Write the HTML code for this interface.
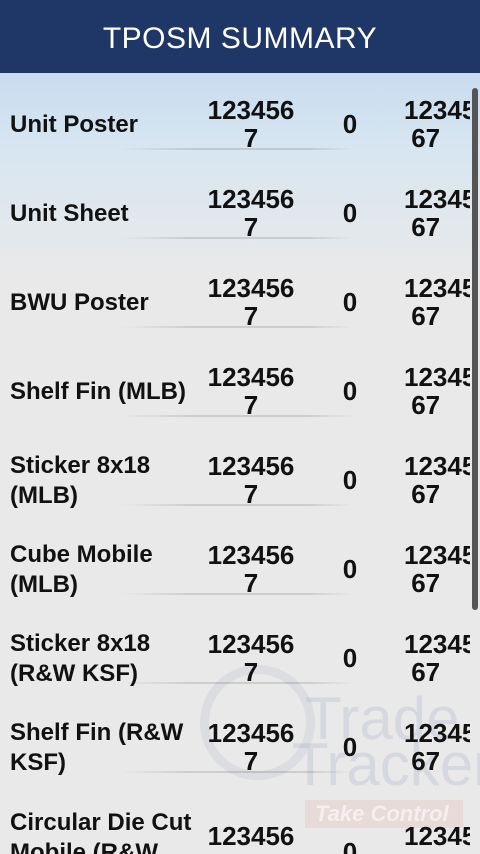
<!DOCTYPE html>
<html><head><style>
*{margin:0;padding:0;box-sizing:border-box}
html,body{width:480px;height:854px;overflow:hidden}
body{background:#e9e9e9;font-family:"Liberation Sans",sans-serif;position:relative}
.hd{position:absolute;left:0;top:0;width:480px;height:73px;background:#1f3766;color:#fff;font-size:30px;text-align:center;line-height:78px;letter-spacing:0.5px}
.bg{position:absolute;left:0;top:73px;width:480px;height:200px;background:linear-gradient(180deg,#c9dcef 0%,#d8e6f1 40%,#e9e9e9 100%)}
.row{position:absolute;left:0;width:480px;height:89px;font-weight:bold;color:#111}
.lab{position:absolute;left:10px;font-size:24px;line-height:30px;white-space:nowrap}
.n{position:absolute;font-size:26px;line-height:28px;text-align:center}
.c2{left:200px;width:102px;top:-14px}
.c3{left:335px;width:30px;top:0}
.c4{left:400px;width:70px;top:-14px;text-align:left;padding-left:4px;overflow:hidden;white-space:nowrap}
.sep{position:absolute;left:120px;width:234px;height:2px;background:linear-gradient(90deg,rgba(0,0,0,0),rgba(0,0,0,0.12) 30%,rgba(0,0,0,0.12) 80%,rgba(0,0,0,0));top:38px}
.sb{position:absolute;left:472px;top:88px;width:6px;height:522px;background:#555;border-radius:3px}
.wm{position:absolute;color:rgba(120,140,170,0.18);font-size:60px;font-weight:normal}
.last{position:absolute;left:0;top:800px;width:480px;height:54px;overflow:hidden}
</style></head><body>
<div class="hd">TPOSM SUMMARY</div>
<div class="bg"></div>
<div class="wm" style="left:305px;top:684px">Trade</div>
<div class="wm" style="left:292px;top:730px;width:188px;overflow:hidden;white-space:nowrap">Tracker</div>
<div style="position:absolute;left:200px;top:665px;width:115px;height:115px;border:9px solid rgba(120,140,170,0.12);border-radius:50%"></div>
<div style="position:absolute;left:305px;top:800px;width:158px;height:28px;background:rgba(220,150,140,0.18);color:rgba(255,255,255,0.6);font-style:italic;font-weight:bold;font-size:22px;line-height:28px;padding-left:10px">Take Control</div>

<div class="row" style="top:110px"><div class="lab">Unit Poster</div><div class="n c2">123456<br>7</div><div class="n c3">0</div><div class="n c4">12345<br>&nbsp;67</div><div class="sep"></div></div>
<div class="row" style="top:199px"><div class="lab">Unit Sheet</div><div class="n c2">123456<br>7</div><div class="n c3">0</div><div class="n c4">12345<br>&nbsp;67</div><div class="sep"></div></div>
<div class="row" style="top:288px"><div class="lab">BWU Poster</div><div class="n c2">123456<br>7</div><div class="n c3">0</div><div class="n c4">12345<br>&nbsp;67</div><div class="sep"></div></div>
<div class="row" style="top:377px"><div class="lab">Shelf Fin (MLB)</div><div class="n c2">123456<br>7</div><div class="n c3">0</div><div class="n c4">12345<br>&nbsp;67</div><div class="sep"></div></div>
<div class="row" style="top:466px"><div class="lab" style="top:-15px">Sticker 8x18<br>(MLB)</div><div class="n c2">123456<br>7</div><div class="n c3">0</div><div class="n c4">12345<br>&nbsp;67</div><div class="sep"></div></div>
<div class="row" style="top:555px"><div class="lab" style="top:-15px">Cube Mobile<br>(MLB)</div><div class="n c2">123456<br>7</div><div class="n c3">0</div><div class="n c4">12345<br>&nbsp;67</div><div class="sep"></div></div>
<div class="row" style="top:644px"><div class="lab" style="top:-15px">Sticker 8x18<br>(R&amp;W KSF)</div><div class="n c2">123456<br>7</div><div class="n c3">0</div><div class="n c4">12345<br>&nbsp;67</div><div class="sep"></div></div>
<div class="row" style="top:733px"><div class="lab" style="top:-15px">Shelf Fin (R&amp;W<br>KSF)</div><div class="n c2">123456<br>7</div><div class="n c3">0</div><div class="n c4">12345<br>&nbsp;67</div><div class="sep"></div></div>
<div class="last"><div class="row" style="top:36px;height:18px"><div class="lab" style="top:-28px">Circular Die Cut<br>Mobile (R&amp;W</div><div class="n c2">123456<br>7</div><div class="n c3" style="top:2px">0</div><div class="n c4">12345<br>&nbsp;67</div></div></div>
<div class="sb"></div>
</body></html>
